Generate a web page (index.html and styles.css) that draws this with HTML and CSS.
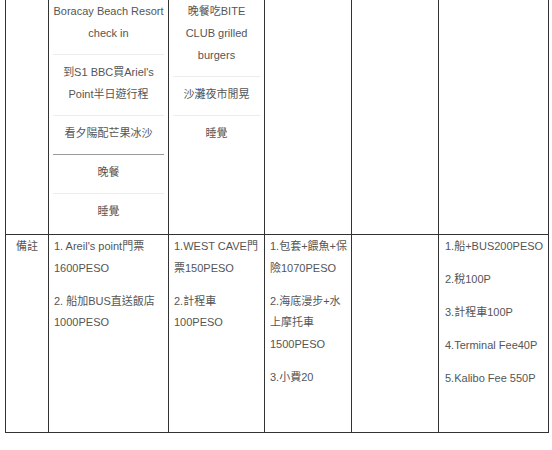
FILE: index.html
```html
<!DOCTYPE html>
<html lang="zh-Hant">
<head>
<meta charset="utf-8">
<title>Itinerary</title>
<link rel="stylesheet" href="styles.css">
</head>
<body>
<div class="sheet">
<table class="plan">
  <colgroup>
    <col class="c1"><col class="c2"><col class="c3"><col class="c4"><col class="c5"><col class="c6">
  </colgroup>
  <tr class="days">
    <td></td>
    <td>
      <div class="item">Boracay Beach Resort<br>check in</div>
      <div class="item">到S1 BBC買Ariel's<br>Point半日遊行程</div>
      <div class="item">看夕陽配芒果冰沙</div>
      <div class="item dark">晚餐</div>
      <div class="item">睡覺</div>
    </td>
    <td>
      <div class="item">晚餐吃BITE<br>CLUB grilled<br>burgers</div>
      <div class="item">沙灘夜市閒晃</div>
      <div class="item">睡覺</div>
    </td>
    <td></td>
    <td></td>
    <td></td>
  </tr>
  <tr class="notes">
    <td class="label">備註</td>
    <td>
      <p>1. Areil's point門票<br>1600PESO</p>
      <p>2. 船加BUS直送飯店<br>1000PESO</p>
    </td>
    <td>
      <p>1.WEST CAVE門<br>票150PESO</p>
      <p>2.計程車<br>100PESO</p>
    </td>
    <td>
      <p>1.包套+餵魚+保<br>險1070PESO</p>
      <p>2.海底漫步+水<br>上摩托車<br>1500PESO</p>
      <p>3.小費20</p>
    </td>
    <td></td>
    <td class="wide">
      <p>1.船+BUS200PESO</p>
      <p>2.稅100P</p>
      <p>3.計程車100P</p>
      <p>4.Terminal Fee40P</p>
      <p>5.Kalibo Fee 550P</p>
    </td>
  </tr>
</table>
</div>
</body>
</html>
```
FILE: styles.css
```css
html, body {
  margin: 0;
  padding: 0;
  background: #ffffff;
}

body {
  font-family: "Liberation Sans", "Noto Sans CJK TC", sans-serif;
  font-size: 11px;
  color: #555555;
  overflow: hidden;
}

.sheet {
  padding-left: 5px;
}

.plan {
  border-collapse: collapse;
  table-layout: fixed;
  width: 543px;
  margin-top: -7px;
}

.c1 { width: 43px; }
.c2 { width: 120px; }
.c3 { width: 96px; }
.c4 { width: 87px; }
.c5 { width: 87px; }
.c6 { width: 110px; }

.plan td {
  border: 1px solid #333333;
  vertical-align: top;
}

.days td {
  padding: 0 4px 2px;
  text-align: center;
}

.item {
  line-height: 22px;
  padding: 6px 0 10px;
  border-top: 1px solid #ececec;
  white-space: nowrap;
}

.item:first-child {
  border-top: none;
}

.item.dark {
  border-top-color: #9a9a9a;
}

.notes td {
  height: 196px;
  padding: 1px 2px 0 5px;
  text-align: left;
  line-height: 21.5px;
}

.notes td.label {
  text-align: center;
  padding: 1px 2px 0;
}

.notes td.wide {
  padding-left: 6px;
}

.notes p {
  margin: 0 0 11.5px;
  white-space: nowrap;
}
```
